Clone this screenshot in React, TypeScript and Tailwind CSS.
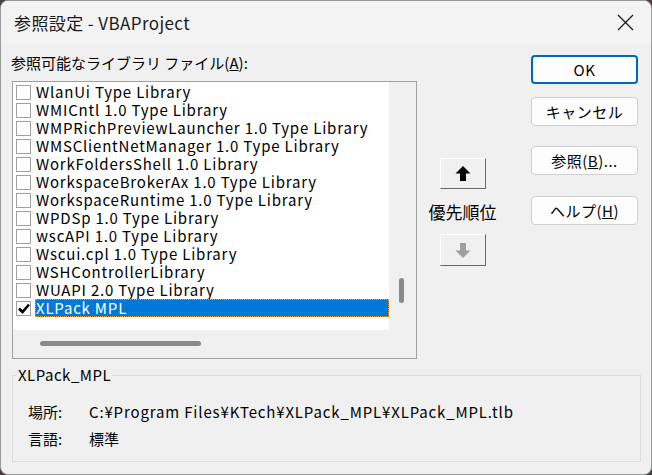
import React from 'react';

const ITEMS = [
  'WlanUi Type Library',
  'WMICntl 1.0 Type Library',
  'WMPRichPreviewLauncher 1.0 Type Library',
  'WMSClientNetManager 1.0 Type Library',
  'WorkFoldersShell 1.0 Library',
  'WorkspaceBrokerAx 1.0 Type Library',
  'WorkspaceRuntime 1.0 Type Library',
  'WPDSp 1.0 Type Library',
  'wscAPI 1.0 Type Library',
  'Wscui.cpl 1.0 Type Library',
  'WSHControllerLibrary',
  'WUAPI 2.0 Type Library',
  'XLPack MPL',
];

const UI = { fontFamily: '"Noto Sans CJK JP", "Noto Sans", sans-serif' };

function Arrow({ up, color }: { up: boolean; color: string }) {
  return (
    <svg width="16" height="15" viewBox="0 0 16 15" style={{ transform: up ? undefined : 'rotate(180deg)' }}>
      <polygon points="8,0 15.5,7.5 11,7.5 11,15 5,15 5,7.5 0.5,7.5" fill={color} />
    </svg>
  );
}

function Button({ label, primary, className }: { label: React.ReactNode; primary?: boolean; className?: string }) {
  return (
    <div
      className={`w-[107px] h-[29px] flex items-center justify-center rounded-[4px] bg-[#fdfdfd] text-[15px] leading-[18px] tracking-[0.5px] text-black ${
        primary ? 'border-2 border-[#0067c0]' : 'border border-[#d0d0d0]'
      } ${className ?? ''}`}
    >
      {label}
    </div>
  );
}

export default function App() {
  return (
    <div className="w-[652px] h-[475px] bg-[#4b4040] overflow-hidden" style={UI}>
      <div className="w-[652px] h-[475px] rounded-[8px] overflow-hidden bg-[#f0f0f0] border border-[#9a9a9a] flex flex-col">
        {/* title bar */}
        <div className="h-[43px] shrink-0 bg-[#f3f3f3] flex items-center justify-between pl-[13px] pr-[17px]">
          <span className="text-[17px] leading-[20px] tracking-[0.4px] text-[#1a1a1a]">参照設定 - VBAProject</span>
          <svg width="17" height="17" viewBox="0 0 17 17">
            <path d="M1 1 L16 16 M16 1 L1 16" stroke="#1a1a1a" strokeWidth="1.3" />
          </svg>
        </div>

        {/* body */}
        <div className="flex-1 flex flex-col">
          <div className="flex">
            {/* list column */}
            <div className="ml-[11px] w-[405px] pt-[10px]">
              <div className="h-[18px] text-[15px] leading-[18px] text-black -ml-[1px]">
                参照可能なライブラリ ファイル(<span className="underline">A</span>):
              </div>
              <div className="mt-[9px] h-[278px] border border-[#a0a0a0] bg-[#f0f0f0] grid grid-cols-[376px_27px] grid-rows-[248px_28px]">
                <div className="bg-white overflow-hidden pt-[1px]">
                  {ITEMS.map((it, i) => {
                    const sel = i === ITEMS.length - 1;
                    return (
                      <div key={it} className="h-[18px] flex items-center">
                        <div className="ml-[3px] w-[15px] h-[15px] border border-[#a0a0a0] bg-white flex items-center justify-center shrink-0">
                          {sel && (
                            <svg width="12" height="11" viewBox="0 0 12 11">
                              <path d="M1 5.5 L4.5 9 L11 1.5" stroke="#000" strokeWidth="2.6" fill="none" />
                            </svg>
                          )}
                        </div>
                        <div
                          className={`ml-[4px] h-[18px] flex-1 flex items-center pl-[1px] text-[15px] leading-[18px] tracking-[0.8px] whitespace-nowrap ${
                            sel ? 'bg-[#0078d7] text-white outline outline-1 outline-dotted outline-[#f0a030] -outline-offset-1' : 'text-black'
                          }`}
                        >
                          {it}
                        </div>
                      </div>
                    );
                  })}
                </div>
                {/* vertical scrollbar */}
                <div className="relative">
                  <div className="absolute left-[10px] top-[196px] w-[5px] h-[25px] rounded-full bg-[#8a8a8a]" />
                </div>
                {/* horizontal scrollbar */}
                <div className="relative">
                  <div className="absolute left-[27px] top-[11px] w-[161px] h-[5px] rounded-full bg-[#8a8a8a]" />
                </div>
                <div />
              </div>
            </div>

            {/* priority column */}
            <div className="ml-[10px] w-[71px] pt-[114px] flex flex-col items-center">
              <div className="w-[46px] h-[31px] bg-[#f0f0f0] border border-t-white border-l-white border-r-[#696969] border-b-[#696969] flex items-center justify-center">
                <Arrow up color="#000" />
              </div>
              <div className="h-[45px] flex items-center text-[17px] leading-[20px] text-black">優先順位</div>
              <div className="w-[46px] h-[32px] bg-[#f0f0f0] border border-t-white border-l-white border-r-[#696969] border-b-[#696969] flex items-center justify-center">
                <Arrow up={false} color="#a0a0a0" />
              </div>
            </div>

            {/* buttons column */}
            <div className="ml-[33px] pt-[11px] flex flex-col">
              <Button label="OK" primary />
              <Button label="キャンセル" className="mt-[13px]" />
              <Button label={<>参照(<span className="underline">B</span>)...</>} className="mt-[20px]" />
              <Button label={<>ヘルプ(<span className="underline">H</span>)</>} className="mt-[21px]" />
            </div>
          </div>

          {/* group box */}
          <div className="relative mt-[16px] ml-[11px] w-[629px] h-[87px] border border-[#dcdcdc]">
            <span className="absolute -top-[10px] left-[4px] px-[1px] bg-[#f0f0f0] text-[15px] leading-[18px] tracking-[0.5px] text-black">XLPack_MPL</span>
            <div className="pt-[22px] pl-[15px] text-[15px] leading-[18px] text-black">
              <div className="h-[27px] flex items-center">
                <span className="w-[61px]">場所:</span>
                <span className="tracking-[0.85px]">C:¥Program Files¥KTech¥XLPack_MPL¥XLPack_MPL.tlb</span>
              </div>
              <div className="h-[27px] flex items-center">
                <span className="w-[61px]">言語:</span>
                <span>標準</span>
              </div>
            </div>
          </div>
        </div>
      </div>
    </div>
  );
}
